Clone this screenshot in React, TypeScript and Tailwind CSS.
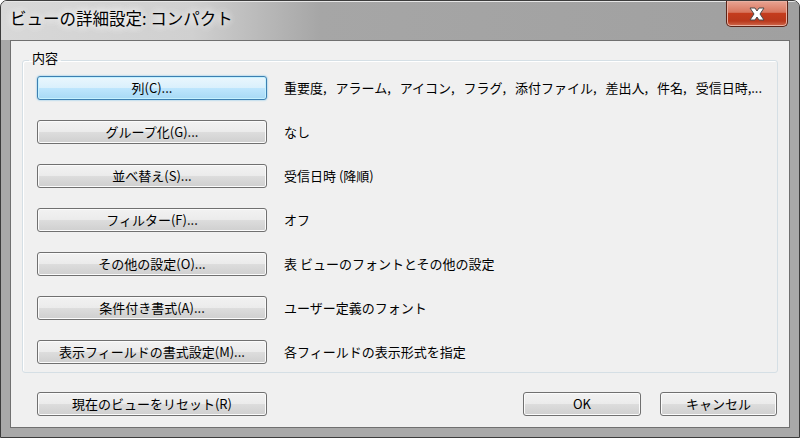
import React from "react";

const font = { fontFamily: '"Noto Sans CJK JP", "Noto Sans", sans-serif' };

function WinButton({
  label,
  w,
  primary,
}: {
  label: string;
  w: string;
  primary?: boolean;
}) {
  const base =
    "h-[24px] shrink-0 rounded-[3px] border text-[13px] leading-[20px] text-black flex items-center justify-center";
  const normal =
    "border-[#707070] bg-[linear-gradient(#f2f2f2_0%,#ebebeb_50%,#dddddd_50%,#cfcfcf_100%)] shadow-[inset_0_0_0_1px_#fbfbfb]";
  const prim =
    "border-[#3c7fb1] bg-[linear-gradient(#eaf6fd_0%,#d9f0fc_50%,#bee6fd_50%,#a7d9f5_100%)] shadow-[inset_0_0_0_1px_#c4f1ff,0_0_2px_#5fb8e8]";
  return (
    <div className={`${base} ${primary ? prim : normal} ${w}`}>{label}</div>
  );
}

const rows: [string, string][] = [
  ["列(C)...", "重要度, アラーム, アイコン, フラグ, 添付ファイル, 差出人, 件名, 受信日時,..."],
  ["グループ化(G)...", "なし"],
  ["並べ替え(S)...", "受信日時 (降順)"],
  ["フィルター(F)...", "オフ"],
  ["その他の設定(O)...", "表 ビューのフォントとその他の設定"],
  ["条件付き書式(A)...", "ユーザー定義のフォント"],
  ["表示フィールドの書式設定(M)...", "各フィールドの表示形式を指定"],
];

export default function App() {
  return (
    <div
      className="w-[800px] h-[438px] overflow-hidden bg-[#a9a9a9] border border-[#3c3c3c] rounded-t-[7px] flex flex-col"
      style={font}
    >
      {/* title bar */}
      <div className="h-[39px] shrink-0 flex items-start justify-between bg-[linear-gradient(to_right,#d8d8d8_0%,#d0d0d0_24%,#a6a6a6_40%,#a0a0a0_100%)] shadow-[inset_0_1px_0_#e6e6e6]">
        <div className="pl-[9px] pt-[5px] text-[16.5px] leading-[24px] text-black [text-shadow:0_0_8px_#ffffff,0_0_8px_#ffffff]">
          ビューの詳細設定: コンパクト
        </div>
        <div className="mr-[11px] w-[62px] h-[26px] rounded-b-[5px] border border-t-0 border-[#5b2418] bg-[linear-gradient(#e8a493_0%,#d8765e_45%,#c43c1d_50%,#b9381c_80%,#d06b4e_100%)] shadow-[inset_0_0_0_1px_#eab1a2] flex items-center justify-center">
          <svg width="20" height="16" viewBox="0 0 20 16">
            <path
              d="M3 2 L8 2 L10 5 L12 2 L17 2 L13 8 L17 14 L12 14 L10 11 L8 14 L3 14 L7 8 Z"
              fill="#ffffff"
              stroke="#4a4a4a"
              strokeWidth="1"
              strokeLinejoin="round"
            />
          </svg>
        </div>
      </div>

      {/* client area */}
      <div className="mx-[9px] h-[388px] shrink-0 border border-[#707070] bg-[#f0f0f0] flex flex-col">
        <fieldset className="mx-[11px] mt-[9px] rounded-[3px] border border-[#d5dfe5] shadow-[inset_1px_1px_0_#ffffff]">
          <legend className="ml-[6px] px-[3px] pb-[5px] text-[13px] leading-[16px] text-black">
            内容
          </legend>
          <div className="pl-[14px] pt-[5px] pb-[8px] flex flex-col gap-[20px]">
            {rows.map(([b, t], i) => (
              <div key={b} className="flex items-center gap-[17px]">
                <WinButton label={b} w="w-[230px]" primary={i === 0} />
                <span
                  className={`text-[13px] leading-[20px] text-black whitespace-nowrap ${
                    i === 0 ? "[word-spacing:6px]" : ""
                  }`}
                >
                  {t}
                </span>
              </div>
            ))}
          </div>
        </fieldset>

        <div className="mt-[19px] pl-[26px] pr-[12px] flex items-center">
          <WinButton label="現在のビューをリセット(R)" w="w-[230px]" />
          <div className="flex-1" />
          <WinButton label="OK" w="w-[118px]" />
          <div className="w-[19px]" />
          <WinButton label="キャンセル" w="w-[117px]" />
        </div>
      </div>
    </div>
  );
}
